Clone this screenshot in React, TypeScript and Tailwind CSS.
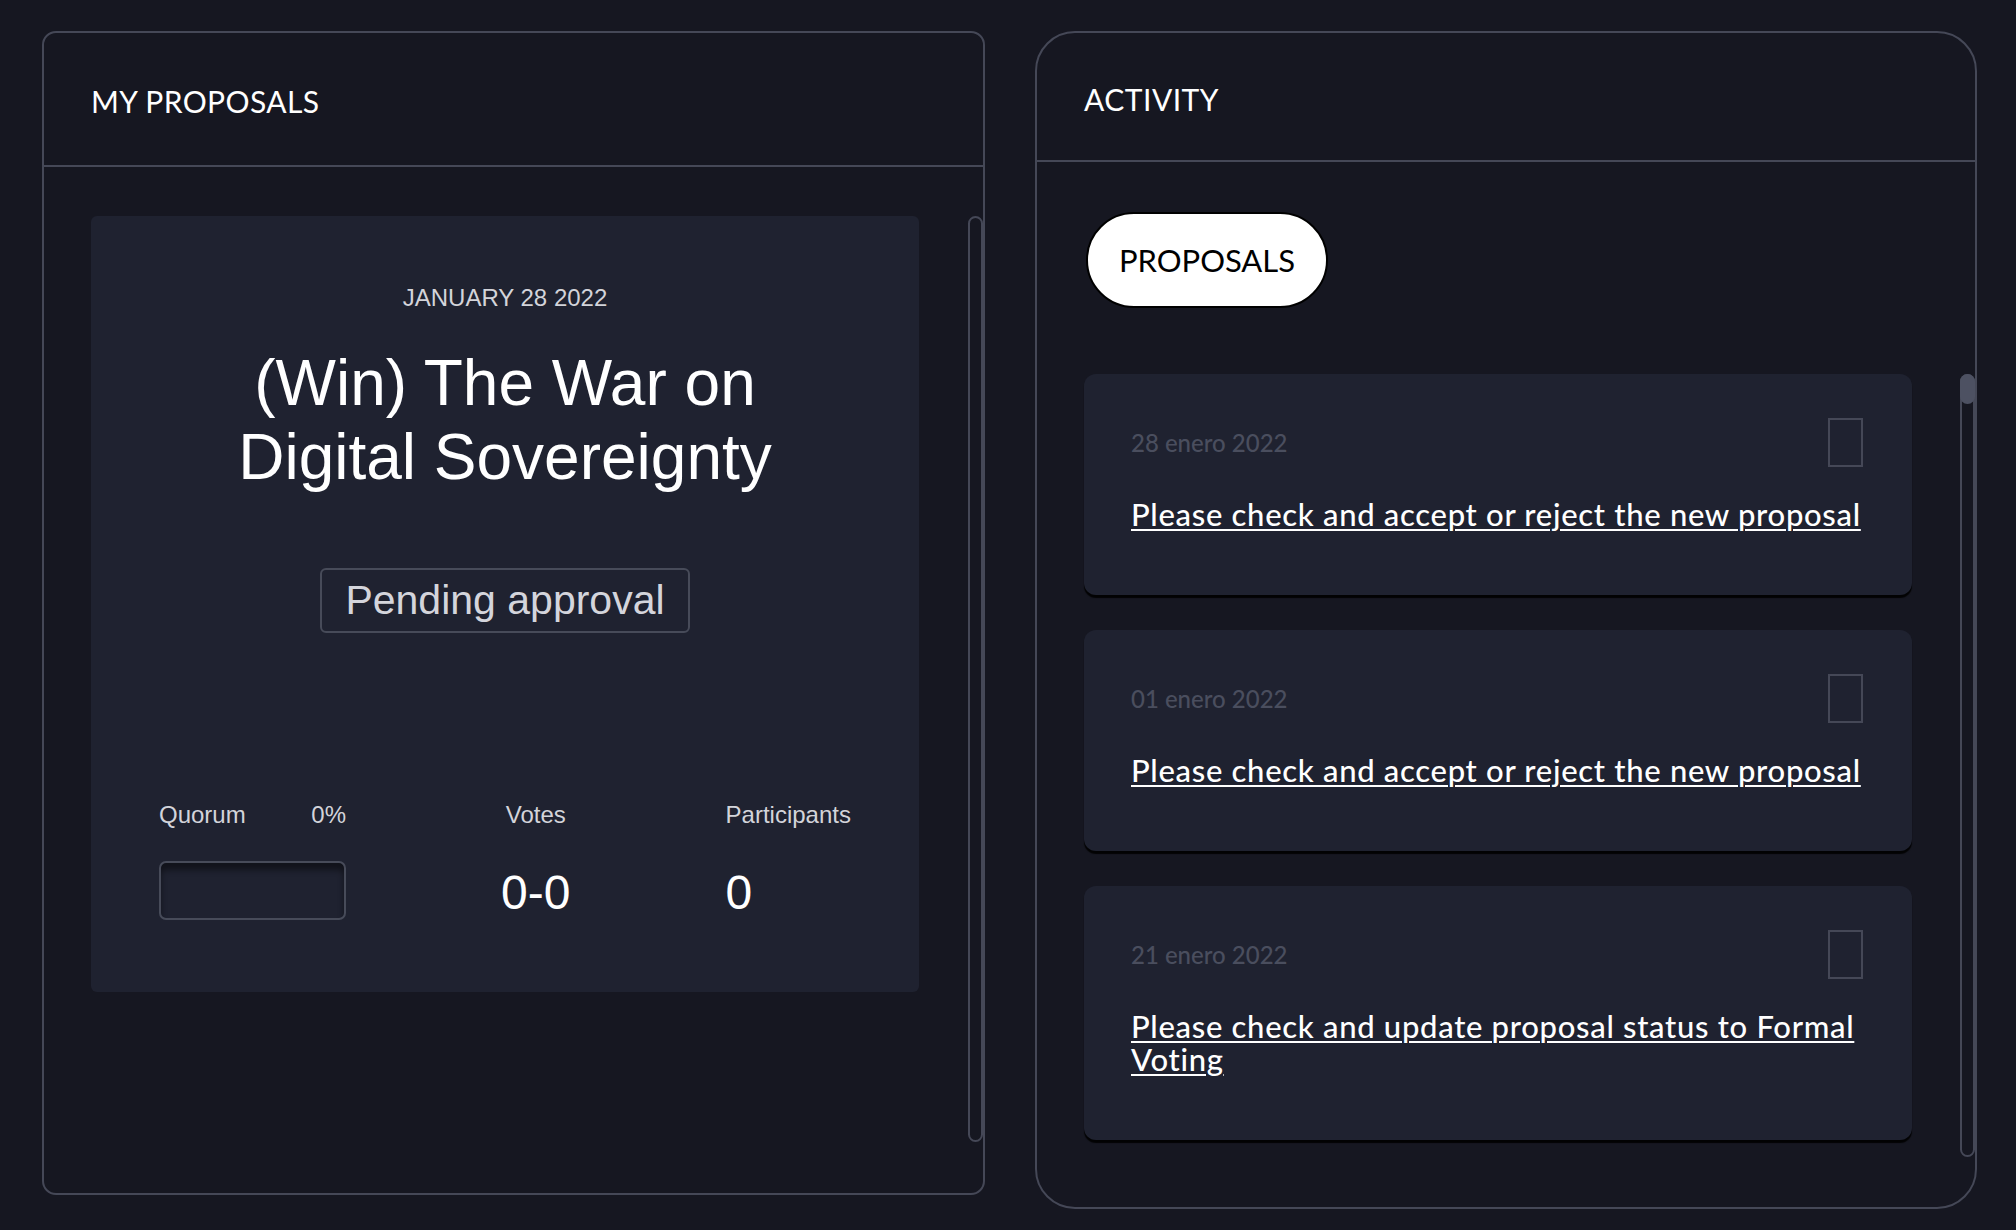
import React from "react";

const sans = { fontFamily: '"Liberation Sans", Arial, sans-serif' };
const geo = { fontFamily: 'Lato, "Noto Sans", sans-serif' };

function ProposalCard() {
  return (
    <div
      className="w-[828px] bg-[#1f2230] rounded-[6px] pt-[68px] pb-[72px] px-[68px] flex flex-col items-center"
      style={sans}
    >
      <div className="text-[24px] leading-[28px] text-[#d3d4da]">JANUARY 28 2022</div>
      <h3 className="mt-[34px] text-[64px] leading-[74px] text-white text-center">
        (Win) The War on
        <br />
        Digital Sovereignty
      </h3>
      <div className="mt-[74px] w-[370px] h-[65px] border-2 border-[#474b59] rounded-[6px] flex items-center justify-center text-[41px] text-[#d4d5dc]">
        Pending approval
      </div>
      <div className="mt-[168px] self-stretch flex justify-between items-start">
        <div className="w-[187px] flex flex-col">
          <div className="flex justify-between text-[24px] leading-[28px] text-[#d3d4da]">
            <span>Quorum</span>
            <span>0%</span>
          </div>
          <div className="mt-[32px] h-[59px] border-2 border-[#474b59] rounded-[7px] bg-[#1f2230] shadow-[inset_0_7px_6px_rgba(0,0,0,0.45)]" />
        </div>
        <div className="flex flex-col items-center">
          <span className="text-[24px] leading-[28px] text-[#d3d4da]">Votes</span>
          <div className="mt-[32px] h-[59px] pt-[4px] flex items-center text-[48px] leading-[56px] text-white">0-0</div>
        </div>
        <div className="flex flex-col items-start">
          <span className="text-[24px] leading-[28px] text-[#d3d4da]">Participants</span>
          <div className="mt-[32px] h-[59px] pt-[4px] flex items-center text-[48px] leading-[56px] text-white">0</div>
        </div>
      </div>
    </div>
  );
}

function ActivityCard({ date, text }: { date: string; text: string }) {
  return (
    <div className="bg-[#1f2230] rounded-[12px] shadow-[0_3px_1px_rgba(0,0,0,0.9)] pt-[44px] pb-[64px] pl-[47px] pr-[49px]">
      <div className="flex items-center justify-between">
        <span className="text-[24px] leading-[28px] text-[#4a4e5e] font-medium">{date}</span>
        <div className="w-[35px] h-[49px] border-2 border-[#454857]" />
      </div>
      <a
        href="#"
        className="block mt-[31px] text-[31px] leading-[33px] tracking-[0.7px] font-medium text-white underline decoration-2 underline-offset-[3px]"
      >
        {text}
      </a>
    </div>
  );
}

export default function App() {
  return (
    <div className="w-[2016px] h-[1230px] bg-[#161721] flex items-start pl-[42px] pt-[31px] gap-[50px]" style={geo}>
      {/* My proposals */}
      <section className="w-[943px] h-[1164px] border-2 border-[#454857] rounded-[14px] flex flex-col">
        <div className="h-[134px] shrink-0 pt-[4px] pl-[47px] flex items-center border-b-2 border-[#454857]">
          <h2 className="text-[30px] leading-[36px] tracking-[0.4px] text-white">MY PROPOSALS</h2>
        </div>
        <div className="flex items-start pt-[49px] pl-[47px]">
          <ProposalCard />
          <div className="ml-[49px] w-[15px] h-[926px] border-2 border-[#454857] rounded-full" />
        </div>
      </section>

      {/* Activity */}
      <section className="w-[942px] h-[1178px] border-2 border-[#454857] rounded-[40px] flex flex-col">
        <div className="h-[129px] shrink-0 pt-[4px] pl-[47px] flex items-center border-b-2 border-[#454857]">
          <h2 className="text-[30px] leading-[36px] tracking-[0.5px] text-white">ACTIVITY</h2>
        </div>
        <div className="flex flex-col">
          <button className="ml-[49px] mt-[50px] w-[242px] h-[96px] rounded-full bg-white border-2 border-black text-black text-[31px] leading-[36px] flex items-center justify-center">
            PROPOSALS
          </button>
          <div className="mt-[66px] flex items-start">
            <div className="ml-[47px] w-[828px] flex flex-col gap-[35px]">
              <ActivityCard date="28 enero 2022" text="Please check and accept or reject the new proposal" />
              <ActivityCard date="01 enero 2022" text="Please check and accept or reject the new proposal" />
              <ActivityCard date="21 enero 2022" text="Please check and update proposal status to Formal Voting" />
            </div>
            <div className="relative ml-[48px] w-[15px] h-[783px] border-2 border-[#454857] rounded-full">
              <div className="absolute -top-[2px] -left-[2px] -right-[2px] h-[30px] rounded-full bg-[#4d5162]" />
            </div>
          </div>
        </div>
      </section>
    </div>
  );
}
